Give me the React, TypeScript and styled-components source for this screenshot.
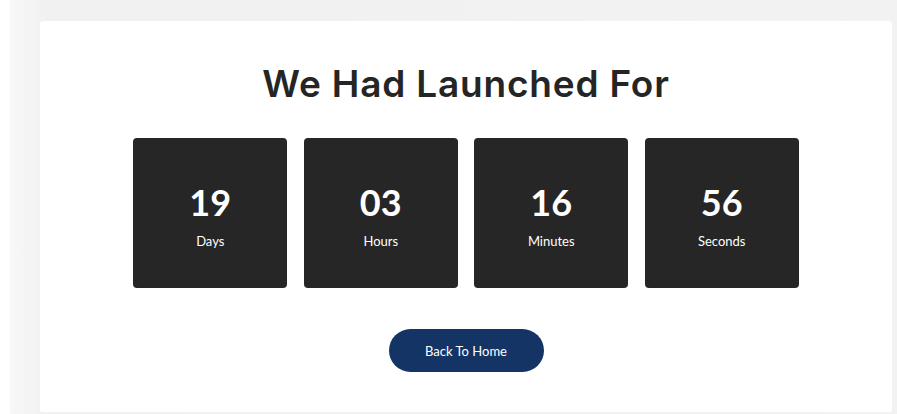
import React from "react";
import styled, { createGlobalStyle } from "styled-components";

const Global = createGlobalStyle`
  html, body { margin: 0; padding: 0; background: #ffffff; }
  body { font-family: "Lato", "Liberation Sans", sans-serif; }
`;

const Frame = styled.div`
  margin-left: 10px;
  height: 414px;
  box-sizing: border-box;
  padding: 21px 5px 0 30px;
  background: linear-gradient(to right, #f8f8f8 0%, #f1f1f1 4%, #f2f2f2 100%);
  overflow: hidden;
`;

const Card = styled.div`
  background: #ffffff;
  height: 391px;
  box-sizing: border-box;
  border-radius: 3px;
  display: flex;
  flex-direction: column;
  align-items: center;
  padding-top: 38px;
`;

const Title = styled.h1`
  margin: 0;
  font-family: "Inter", "Liberation Sans", sans-serif;
  font-weight: 600;
  font-size: 37px;
  line-height: 50px;
  letter-spacing: 0.8px;
  color: #252525;
`;

const Grid = styled.div`
  display: flex;
  gap: 16.5px;
  margin-top: 29px;
`;

const Box = styled.div`
  width: 154px;
  height: 150px;
  background: #262626;
  border-radius: 4px;
  display: flex;
  flex-direction: column;
  align-items: center;
  justify-content: center;
  color: #ffffff;
`;

const Num = styled.div`
  font-family: "Lato", sans-serif;
  font-weight: 700;
  font-size: 36px;
  line-height: 38px;
  margin-top: 6px;
`;

const Label = styled.div`
  font-family: "Lato", sans-serif;
  font-size: 13px;
  line-height: 16px;
  margin-top: 12px;
`;

const Button = styled.button`
  margin-top: 41px;
  width: 155px;
  height: 43px;
  border: none;
  border-radius: 22px;
  background: #143466;
  color: #ffffff;
  font-family: "Lato", sans-serif;
  font-size: 13px;
  cursor: pointer;
`;

const items = [
  { n: "19", l: "Days" },
  { n: "03", l: "Hours" },
  { n: "16", l: "Minutes" },
  { n: "56", l: "Seconds" },
];

export default function App() {
  return (
    <>
      <Global />
      <Frame>
        <Card>
          <Title>We Had Launched For</Title>
          <Grid>
            {items.map((it) => (
              <Box key={it.l}>
                <Num>{it.n}</Num>
                <Label>{it.l}</Label>
              </Box>
            ))}
          </Grid>
          <Button>Back To Home</Button>
        </Card>
      </Frame>
    </>
  );
}
